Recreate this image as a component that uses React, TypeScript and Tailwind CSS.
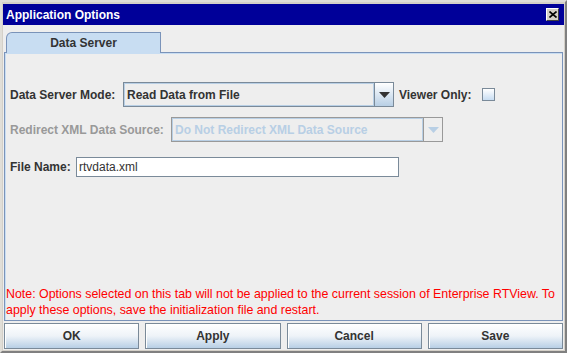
import React from "react";

const font = { fontFamily: '"Liberation Sans", Arial, sans-serif' };

const ComboArrow = ({ disabled }: { disabled?: boolean }) => (
    <div
        className={`w-[19px] h-full flex items-center justify-center border-l ${disabled
            ? "bg-[#eeeeee] border-[#999999]"
            : "bg-gradient-to-b from-white to-[#b8cfe5] border-[#7a8a99]"
            }`}
    >
        <svg width="11" height="6" viewBox="0 0 11 6">
            <path d="M0 0 H11 L5.5 6 Z" fill={disabled ? "#b8cfe5" : "#333333"} />
        </svg>
    </div>
);

const Button = ({ label }: { label: string }) => (
    <button className="h-full border border-[#7a8a99] bg-gradient-to-b from-white via-[#eef3f8] to-[#b8cfe5] text-[12px] font-bold text-[#333333] shadow-[inset_1px_1px_0_#ffffff]">
        {label}
    </button>
);

const App = () => {
    return (
        <div
            className="w-[567px] h-[353px] bg-[#d4d0c8] border-t-2 border-l-2 border-t-[#e0ded8] border-l-[#e0ded8] border-r-2 border-b-2 border-r-[#808080] border-b-[#808080] pt-[2px] pl-[1px] pr-[1px] pb-[1px] flex flex-col"
            style={font}
        >
            {/* Title bar */}
            <div className="h-[21px] bg-[#000099] flex items-center justify-between pl-[3px] pr-[5px]">
                <span className="text-white text-[12px] font-bold">Application Options</span>
                <div className="w-[13px] h-[13px] bg-[#d4d0c8] border border-t-white border-l-white border-r-[#404040] border-b-[#404040] flex items-center justify-center">
                    <svg width="8" height="7" viewBox="0 0 8 7">
                        <path d="M0.5 0.5 L7.5 6.5 M7.5 0.5 L0.5 6.5" stroke="#000" strokeWidth="1.6" />
                    </svg>
                </div>
            </div>

            {/* Body */}
            <div className="flex-1 bg-[#eeeeee] flex flex-col px-[1px] pb-[1px]">
                {/* Tab strip */}
                <div className="flex items-end h-[27px] pl-[2px]">
                    <div className="w-[155px] h-[21px] bg-[#c8ddf2] border border-b-0 border-[#7a93b9] rounded-tl-[6px] flex items-center justify-center text-[12px] font-bold text-[#333333] mb-[-1px] relative z-10">
                        Data Server
                    </div>
                </div>

                {/* Panel */}
                <div className="flex-1 border border-[#7a93b9] shadow-[inset_1px_1px_0_#c8ddf2] flex flex-col px-[5px] pt-[29px] pb-[2px] text-[12px]">
                    <div className="flex items-center h-[25px]">
                        <span className="font-bold text-[#333333] w-[113px]">Data Server Mode:</span>
                        <div className="w-[271px] h-full flex border border-[#7a8a99] bg-[#eeeeee]">
                            <div className="flex-1 flex items-center pl-[2px] font-bold text-[#333333] border border-[#b8cfe5]">
                                Read Data from File
                            </div>
                            <ComboArrow />
                        </div>
                        <span className="font-bold text-[#333333] ml-[5px]">Viewer Only:</span>
                        <div className="w-[13px] h-[13px] ml-[11px] border border-[#7a8a99] bg-gradient-to-b from-white to-[#c8ddf2]" />
                    </div>

                    <div className="flex items-center h-[25px] mt-[10px]">
                        <span className="font-bold text-[#999999] w-[161px]">Redirect XML Data Source:</span>
                        <div className="w-[272px] h-full flex border border-[#999999] bg-[#eeeeee]">
                            <div className="flex-1 flex items-center pl-[2px] font-bold text-[#b8cfe5] border border-[#b8cfe5]">
                                Do Not Redirect XML Data Source
                            </div>
                            <ComboArrow disabled />
                        </div>
                    </div>

                    <div className="flex items-center h-[20px] mt-[15px]">
                        <span className="font-bold text-[#333333] w-[66px]">File Name:</span>
                        <div className="w-[323px] h-full border border-[#7a8a99] bg-white flex items-center pl-[2px] text-[#333333]">
                            rtvdata.xml
                        </div>
                    </div>

                    <div className="flex-1" />
                    <p className="text-[#ff0000] text-[12.4px] leading-[16px] ml-[-4px] mr-[-4px]">
                        Note: Options selected on this tab will not be applied to the current session of Enterprise RTView. To apply these options, save the initialization file and restart.
                    </p>
                </div>

                {/* Buttons */}
                <div className="grid grid-cols-4 gap-[6px] h-[26px] mt-[2px]">
                    <Button label="OK" />
                    <Button label="Apply" />
                    <Button label="Cancel" />
                    <Button label="Save" />
                </div>
            </div>
        </div>
    );
};

export default App;
